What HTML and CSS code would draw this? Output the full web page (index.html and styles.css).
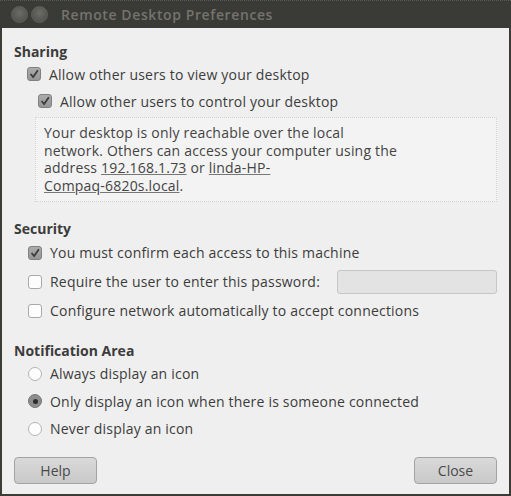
FILE: index.html
```html
<!DOCTYPE html>
<html>
<head>
<meta charset="utf-8">
<link rel="stylesheet" href="styles.css">
</head>
<body>
<div class="window">
  <div class="titlebar">
    <span class="tbtn close"></span>
    <span class="tbtn mini"></span>
    <span class="title">Remote Desktop Preferences</span>
  </div>
  <div class="content">
    <div class="heading h-sharing">Sharing</div>
    <div class="row row-a"><span class="check on"><svg viewBox="0 0 14 14"><path d="M3 7 L6 10.5 L11.5 2.5"/></svg></span><span>Allow other users to view your desktop</span></div>
    <div class="row row-b"><span class="check on"><svg viewBox="0 0 14 14"><path d="M3 7 L6 10.5 L11.5 2.5"/></svg></span><span>Allow other users to control your desktop</span></div>
    <div class="infobox">Your desktop is only reachable over the local<br>network. Others can access your computer using the<br>address <u>192.168.1.73</u> or <u>linda-HP-</u><br><u>Compaq-6820s.local</u>.</div>

    <div class="heading h-security">Security</div>
    <div class="row row-s"><span class="check on"><svg viewBox="0 0 14 14"><path d="M3 7 L6 10.5 L11.5 2.5"/></svg></span><span>You must confirm each access to this machine</span></div>
    <div class="row row-s"><span class="check"></span><span>Require the user to enter this password:</span><span class="entry"></span></div>
    <div class="row row-s"><span class="check"></span><span>Configure network automatically to accept connections</span></div>

    <div class="heading h-notif">Notification Area</div>
    <div class="row row-r"><span class="radio"></span><span>Always display an icon</span></div>
    <div class="row row-r"><span class="radio on"><span class="dot"></span></span><span>Only display an icon when there is someone connected</span></div>
    <div class="row row-r"><span class="radio"></span><span>Never display an icon</span></div>

    <div class="buttons">
      <button class="btn">Help</button>
      <button class="btn">Close</button>
    </div>
  </div>
</div>
</body>
</html>
```
FILE: styles.css
```css
html, body {
  margin: 0;
  padding: 0;
  width: 511px;
  height: 496px;
  overflow: hidden;
  background: #3c3b37;
}
.window {
  width: 511px;
  height: 496px;
  display: flex;
  flex-direction: column;
  font-family: "Open Sans", "DejaVu Sans", sans-serif;
  font-size: 14px;
  letter-spacing: 0.2px;
  color: #3c3c3c;
}
.titlebar {
  height: 28px;
  flex: none;
  background: #3a3a37;
  border-top: 1px dotted #5a5a56;
  box-sizing: border-box;
  display: flex;
  align-items: center;
  padding-left: 11px;
}
.tbtn {
  width: 15px;
  height: 15px;
  border-radius: 50%;
  background: radial-gradient(circle at 50% 40%, #6c6c68 0%, #55554f 70%, #4a4a46 100%);
  border: 1px solid #5e5e5a;
  margin-right: 3px;
}
.title {
  margin-left: 10px;
  color: #74746d;
  font-weight: 600;
  font-size: 14px;
  letter-spacing: 0.6px;
}
.content {
  flex: 1;
  background: #efefef;
  margin: 0 2px 2px 2px;
  padding: 12px 12px 0 12px;
  display: flex;
  flex-direction: column;
}
.heading {
  font-weight: bold;
  height: 22px;
  display: flex;
  align-items: center;
  letter-spacing: 0;
}
.h-security { margin-top: 16px; height: 20px; }
.h-notif { margin-top: 15px; height: 20px; }
.row {
  display: flex;
  align-items: center;
  white-space: nowrap;
}
.row-a { height: 24px; padding-left: 13px; }
.row-b { height: 30px; padding-left: 24px; }
.row-s { height: 29px; padding-left: 14px; }
.row-r { height: 27.5px; padding-left: 14px; }
.check {
  width: 14px;
  height: 14px;
  box-sizing: border-box;
  border: 1px solid #a9a9a9;
  border-radius: 3px;
  background: #fdfdfd;
  margin-right: 8px;
  flex: none;
  display: flex;
}
.check.on {
  background: linear-gradient(#ababab, #969696);
  border-color: #808080;
}
.check svg { width: 12px; height: 12px; }
.check path {
  fill: none;
  stroke: #3a3a3a;
  stroke-width: 2;
}
.radio {
  width: 14px;
  height: 14px;
  box-sizing: border-box;
  border: 1px solid #b3b3b3;
  border-radius: 50%;
  background: #fdfdfd;
  margin-right: 8px;
  flex: none;
  display: flex;
  align-items: center;
  justify-content: center;
}
.radio.on {
  background: #8d8d8d;
  border-color: #777;
}
.dot {
  width: 5px;
  height: 5px;
  border-radius: 50%;
  background: #2e2e2e;
}
.entry {
  margin-left: auto;
  margin-right: 0;
  width: 160px;
  height: 24px;
  box-sizing: border-box;
  border: 1px solid #c6c6c6;
  border-radius: 3px;
  background: #e3e3e3;
}
.infobox {
  margin: 1px 0 0 21px;
  height: 85px;
  box-sizing: border-box;
  border: 1px dotted #d3d3d3;
  background: #f3f3f3;
  padding: 6px 8px 0 8px;
  line-height: 17.5px;
  color: #444;
}
.infobox u { text-decoration-color: #777; }
.buttons {
  margin-top: 14px;
  display: flex;
  justify-content: space-between;
}
.btn {
  width: 83px;
  height: 27px;
  border: 1px solid #a3a3a3;
  border-radius: 4px;
  background: linear-gradient(#d9d9d9, #c9c9c9);
  font-family: "Open Sans", "DejaVu Sans", sans-serif;
  font-size: 14px;
  color: #4a4a4a;
  padding: 0;
}
```
